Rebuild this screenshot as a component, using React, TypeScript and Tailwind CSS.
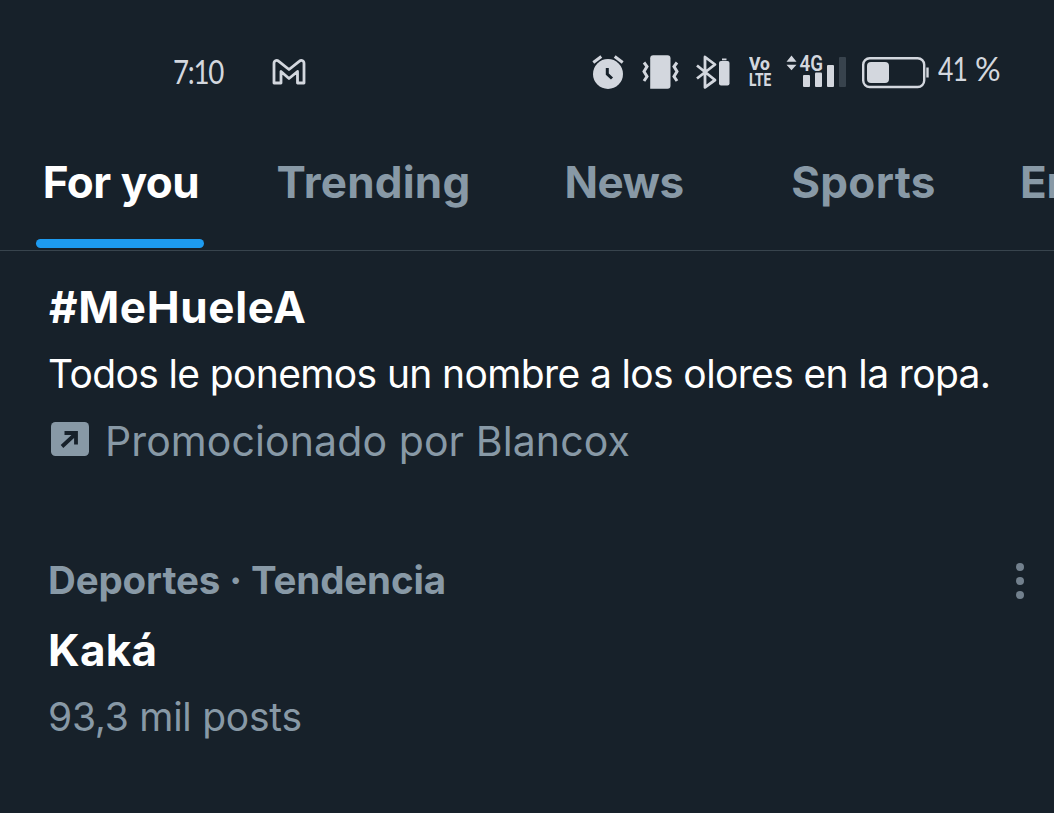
import React, { useState } from 'react';

interface Tab {
  label: string;
  className: string;
}

const TABS: Tab[] = [
  { label: 'For you', className: 'w-[240px] pl-0.5 tracking-[-0.5px]' },
  { label: 'Trending', className: 'w-[267px] tracking-[0.2px]' },
  { label: 'News', className: 'w-[234px] tracking-[-0.5px]' },
  { label: 'Sports', className: 'w-[245px] tracking-[0.3px]' },
  { label: 'Entertainment', className: 'pl-[34px] tracking-[-0.2px]' },
];

const GmailIcon = () => (
  <svg className="h-10 w-10" viewBox="269 52 40 40" fill="none" stroke="#d3d7de" strokeWidth="2.8" strokeLinejoin="round">
    <path d="M274.5 61.5c1.2-1.7 3-1.3 4-.4l10.5 8.4 10.5-8.4c1-.9 2.8-1.3 4 .4.4.6.5 1.2.5 2V83h-6.5V71.5L289 78.5l-8-7V83h-7V63.5c0-.8.1-1.4.5-2z" />
  </svg>
);

const AlarmIcon = () => (
  <svg className="h-10 w-[38px]" viewBox="589 52 38 40">
    <circle cx="608" cy="74" r="15" fill="#d3d7de" />
    <path d="M593.3 62.5l8-6M622.7 62.5l-8-6" stroke="#d3d7de" strokeWidth="3" fill="none" />
    <path d="M607.3 68v6l4.7 4.5" stroke="#17212a" strokeWidth="3" fill="none" />
  </svg>
);

const VibrateIcon = () => (
  <svg className="h-10 w-10" viewBox="641 52 40 40" fill="none" stroke="#d3d7de" strokeWidth="3">
    <path d="M653.5 55.2h14a3 3 0 0 1 3 3v27.6a3 3 0 0 1-3 3h-17.3V58.2a3 3 0 0 1 3-3z" fill="#d3d7de" stroke="none" />
    <path d="M644 62.5l3 4-3 5 3 5-3 4.5M677 62.5l-3 4 3 5-3 5 3 4.5" />
  </svg>
);

const BluetoothIcon = () => (
  <svg className="h-10 w-[38px]" viewBox="694 52 38 40">
    <path d="M697 65.5l18 14.5-10 7.3V57l10 7.5-18 14" fill="none" stroke="#d3d7de" strokeWidth="2.8" strokeLinejoin="round" />
    <rect x="719" y="61" width="10.5" height="24.5" rx="2" fill="#d3d7de" />
    <rect x="722" y="58.5" width="4.5" height="1.8" fill="#d3d7de" />
  </svg>
);

const VolteIcon = () => (
  <div className="flex h-10 w-[26px] flex-col pl-px pt-1 font-['Roboto',sans-serif] font-extrabold">
    <span className="h-[16px] w-[26px] origin-left scale-x-[0.92] text-[19px] leading-[16px]">Vo</span>
    <span className="h-[16px] w-[32px] origin-left scale-x-[0.72] text-[19px] leading-[16px]">LTE</span>
  </div>
);

const SignalIcon = () => (
  <svg className="h-10 w-[62px]" viewBox="785 52 62 40" fill="#d3d7de">
    <path d="M786.5 61.8l5-6.3 5 6.3zM786.5 64.8h10l-5 5.5z" />
    <text x="799.5" y="70.7" fontSize="22" fontFamily="Roboto, sans-serif" fontWeight="600" textLength="23.5" lengthAdjust="spacingAndGlyphs">4G</text>
    <rect x="803" y="75" width="7" height="12" rx="1" />
    <rect x="815" y="72.5" width="7" height="14.5" rx="1" />
    <rect x="827" y="65" width="7" height="22" rx="1" />
    <rect x="839" y="57" width="7" height="30" rx="1" fill="#38434d" />
  </svg>
);

const BatteryIcon = () => (
  <svg className="h-10 w-[70px]" viewBox="860 52 70 40">
    <rect x="863.2" y="58.2" width="61" height="28.8" rx="6.5" fill="none" stroke="#d3d7de" strokeWidth="2.4" />
    <rect x="867" y="62" width="22" height="21" rx="4" fill="#d3d7de" />
    <path d="M927.5 67.5v10" stroke="#d3d7de" strokeWidth="2.4" />
  </svg>
);

const PromotedIcon = () => (
  <svg className="h-[34px] w-[38px]" viewBox="0 0 38 34">
    <rect width="38" height="34" rx="4.5" fill="#8899a6" />
    <path d="M11 24.5L25 11.5M13.5 11h11.5V22.5" fill="none" stroke="#17212a" strokeWidth="3.8" />
  </svg>
);

const MoreIcon = () => (
  <svg className="mt-0.5 h-10 w-10" viewBox="0 0 40 40" fill="#72808d">
    <circle cx="20" cy="6" r="4" />
    <circle cx="20" cy="20" r="4" />
    <circle cx="20" cy="34" r="4" />
  </svg>
);

const StatusBar = () => (
  <div className="flex h-[118px] items-center pt-[26px] text-[#d3d7de] font-['Lato',sans-serif]">
    <div className="ml-[173px] w-24 -mt-0.5 whitespace-nowrap">
      <span className="inline-block origin-left scale-x-[0.84] text-[33px] leading-10 tracking-[-1.5px]">7:10</span>
    </div>
    <GmailIcon />
    <div className="ml-[280px] flex items-center">
      <AlarmIcon />
      <div className="ml-3.5 flex"><VibrateIcon /></div>
      <div className="ml-[13px] flex"><BluetoothIcon /></div>
      <div className="ml-4 flex"><VolteIcon /></div>
      <div className="ml-[11px] flex"><SignalIcon /></div>
      <div className="ml-[13px] flex"><BatteryIcon /></div>
    </div>
    <div className="ml-2 w-[37px] -mt-[7px] whitespace-nowrap">
      <span className="inline-block origin-left scale-x-[0.83] text-[32px] leading-10 tracking-[-1px]">41</span>
    </div>
    <div className="-mt-[7px] whitespace-nowrap">
      <span className="inline-block origin-left text-[32px] leading-10">%</span>
    </div>
  </div>
);

const App = () => {
  const [active, setActive] = useState('For you');

  return (
    <div className="h-[813px] w-[1054px] overflow-hidden bg-[#17212a] font-['Inter',sans-serif] text-white">
      <StatusBar />

      <nav className="flex h-[133px] overflow-hidden border-b border-[#38444d]">
        {TABS.map((tab) => (
          <button
            key={tab.label}
            type="button"
            onClick={() => setActive(tab.label)}
            className={`flex shrink-0 flex-col items-center whitespace-nowrap pt-8 text-[44px] leading-[64px] font-bold ${tab.className} ${
              active === tab.label ? 'text-white' : 'text-[#8899a6]'
            }`}
          >
            {tab.label}
            {active === tab.label && <span className="mt-[25px] mr-0.5 h-[9px] w-[168px] rounded-full bg-[#1d9bf0]" />}
          </button>
        ))}
      </nav>

      <main className="pl-12">
        <article className="pt-[23px] whitespace-nowrap">
          <h2 className="pl-px text-[44px] leading-[66px] font-bold tracking-[0.65px]">#MeHueleA</h2>
          <p className="text-[39px] leading-[68px] tracking-[-0.63px]">Todos le ponemos un nombre a los olores en la ropa.</p>
          <div className="flex items-center gap-4 pl-[3px] text-[#8899a6]">
            <div className="-mt-1"><PromotedIcon /></div>
            <span className="text-[41px] leading-[66px] tracking-[0.1px]">Promocionado por Blancox</span>
          </div>
        </article>

        <article className="mt-[73px] whitespace-nowrap">
          <div className="flex items-center justify-between pr-3.5 text-[#8899a6]">
            <span className="text-[38.5px] leading-[66px] font-bold tracking-[-0.13px]">Deportes · Tendencia</span>
            <MoreIcon />
          </div>
          <h2 className="text-[44px] leading-[74px] font-bold tracking-[0.3px]">Kaká</h2>
          <p className="text-[39px] leading-[60px] text-[#8899a6] tracking-[-0.27px]">93,3 mil posts</p>
        </article>
      </main>
    </div>
  );
};

export default App;
